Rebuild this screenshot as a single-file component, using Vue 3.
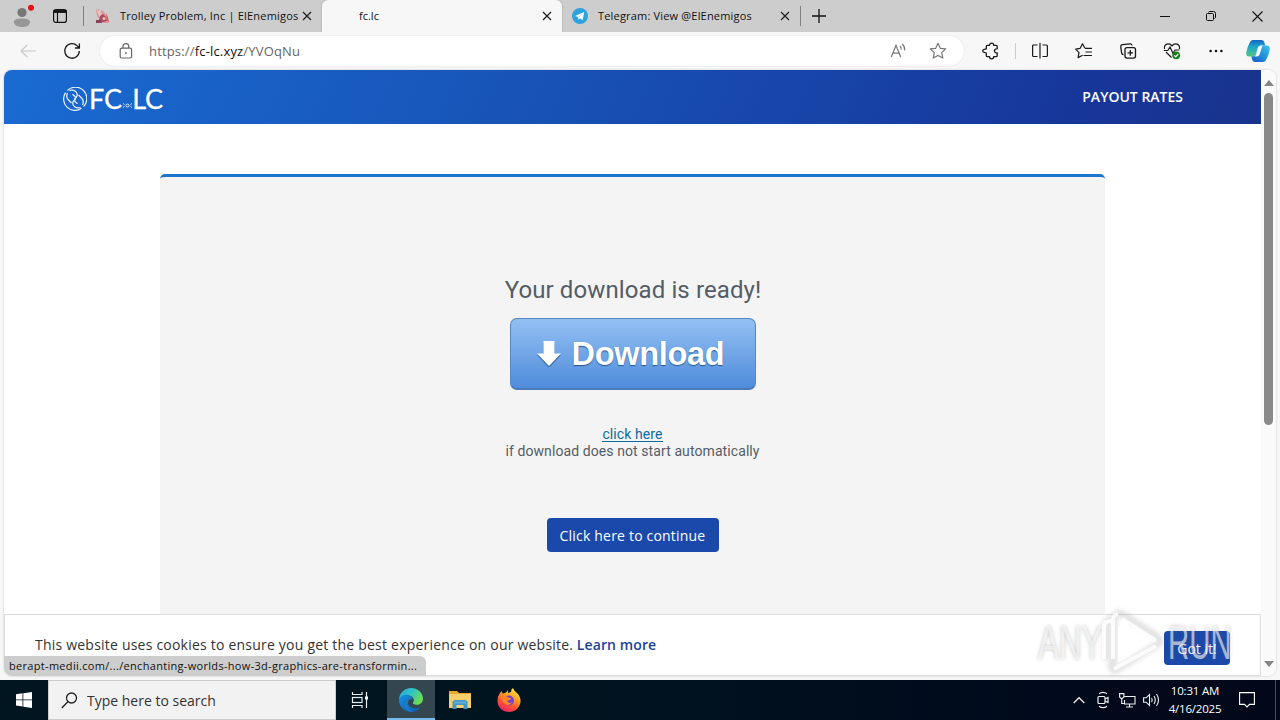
<script setup>
import { ref } from "vue";

const search = ref("");
const cookieBar = ref(true);
</script>

<template>
  <div class="desktop">
    <div class="tabstrip">
      <div class="profile">
        <svg width="24" height="24" viewBox="0 0 24 24">
          <circle cx="10" cy="8.5" r="4.6" fill="#777" />
          <path d="M1.8 18.5c0-3 3-4 8.200-4s8.200 1 8.200 4c-1.500 4-5 4.500-8.200 4.500s-6.700-.5-8.200-4.500z" fill="#979797" />
          <circle cx="19" cy="3.800" r="3" fill="#e8101c" />
        </svg>
      </div>
      <svg class="workspaces" width="16" height="16" viewBox="0 0 16 16" fill="none" stroke="#111" stroke-width="1.200">
        <rect x="1.600" y="1.600" width="12.800" height="12.800" rx="2.200" />
        <path d="M1.600 3.500h12.800" stroke-width="2.800" />
        <path d="M5.500 4v10.400" />
      </svg>
      <div class="tab tab-first">
        <svg class="favicon" width="16" height="16" viewBox="0 0 16 16">
          <path d="M1 2l3-1 1 3 2-2 3 3 2 4 1 2 1 4H2l2-4-2-3z" fill="#d99b9c" />
          <path d="M2 2l3 1 2 4-2 2-2-3z" fill="#ecc3bd" />
          <path d="M5 8l3-2 3 3 1 4-4 1-4-1z" fill="#ab4a63" />
          <circle cx="9" cy="10.500" r="1.500" fill="#edc6bd" />
          <path d="M1 12h5l1 3H1z" fill="#8a4058" />
          <path d="M11 5l2 4 1 5-2-1z" fill="#d86a58" />
        </svg>
        <span class="tab-title t1">Trolley Problem, Inc | ElEnemigos</span>
        <svg class="close" width="10" height="10" viewBox="0 0 10 10"><path d="M1 1l8 8M9 1L1 9" stroke="#222" stroke-width="1.300" /></svg>
      </div>
      <div class="tab tab-active">
        <span class="tab-title t2">fc.lc</span>
        <svg class="close" width="10" height="10" viewBox="0 0 10 10"><path d="M1 1l8 8M9 1L1 9" stroke="#222" stroke-width="1.300" /></svg>
      </div>
      <div class="tab tab-last">
        <svg class="favicon" width="16" height="16" viewBox="0 0 16 16">
          <circle cx="8" cy="8" r="8" fill="#2ca3dc" />
          <path d="M3 7.900l9.200-3.900-1.500 8.200-2.700-2-1.500 1.500-.4-2.600z" fill="#fff" />
          <path d="M6 9l4.500-3.200L7 9.600z" fill="#b4d8ec" />
        </svg>
        <span class="tab-title t3">Telegram: View @ElEnemigos</span>
        <svg class="close" width="10" height="10" viewBox="0 0 10 10"><path d="M1 1l8 8M9 1L1 9" stroke="#222" stroke-width="1.300" /></svg>
      </div>
      <svg class="new-tab" width="14" height="14" viewBox="0 0 14 14"><path d="M7 0v14M0 7h14" stroke="#111" stroke-width="1.300" /></svg>
      <div class="win-controls">
        <span><svg width="10" height="10"><path d="M0 5.500h10" stroke="#111" /></svg></span>
        <span>
          <svg width="10" height="10" viewBox="0 0 10 10" fill="none" stroke="#111">
            <rect x=".5" y="2.500" width="7" height="7" rx="1" />
            <path d="M2.500 1.500q.3-1 1.300-1h3.700a2 2 0 0 1 2 2v3.700q0 1-1 1.300" />
          </svg>
        </span>
        <span><svg width="11" height="11" viewBox="0 0 11 11"><path d="M.5.5l10 10M10.500.5l-10 10" stroke="#111" stroke-width="1.100" /></svg></span>
      </div>
    </div>

    <div class="toolbar">
      <svg class="back" width="16" height="14" viewBox="0 0 16 14" fill="none" stroke="#c8c8c8" stroke-width="1.200"><path d="M16 7H1M7.500.7L1 7l6.500 6.300" /></svg>
      <svg class="reload" width="18" height="18" viewBox="0 0 18 18" fill="none" stroke="#1a1a1a" stroke-width="1.300">
        <path d="M16.300 9a7.300 7.300 0 1 1-2-5.100L16.300 6M16.400 1.500V6h-4.500" />
      </svg>
      <div class="address">
        <svg class="lock" width="14" height="16" viewBox="0 0 14 16" fill="none" stroke="#666" stroke-width="1.200">
          <rect x="1.200" y="5.200" width="11.400" height="9.800" rx="1.500" />
          <path d="M4 5V3.500a2.900 2.900 0 0 1 5.800 0V5" />
          <circle cx="6.900" cy="10" r=".7" fill="#666" stroke-width=".6" />
        </svg>
        <span class="url">https://<b>fc-lc.xyz</b>/YVOqNu</span>
        <svg class="read-aloud" width="18" height="16" viewBox="0 0 18 16" fill="none" stroke="#777" stroke-width="1.200">
          <path d="M2.300 14L7 2.300 11.700 14M3.900 10.200h6.200M11 3q1.500 1.500 1.200 3.600M13.200 1q2.900 2.600 2.400 6.300" />
        </svg>
        <svg class="star" width="18" height="18" viewBox="0 0 18 18" fill="none" stroke="#777" stroke-width="1.200" stroke-linejoin="round">
          <path d="M9 1.300l2.300 5 5.400.6-4 3.700 1.100 5.500L9 13.400l-4.800 2.700 1.100-5.500-4-3.700 5.400-.6z" />
        </svg>
      </div>
      <span class="tool ext">
        <svg width="18" height="18" viewBox="0 0 18 18" fill="none" stroke="#1a1a1a" stroke-width="1.300" stroke-linejoin="round">
          <path d="M5.500 3.300h2a2.100 2.100 0 0 1 4.200 0h2.300q1.200 0 1.200 1.200v2.300h-.6a2 2 0 0 0 0 4.200h.6v2.500q0 1.200-1.200 1.200h-2.300a2.100 2.100 0 0 1-4.200 0h-2q-1.200 0-1.200-1.200V11l-2-.6a1.500 1.500 0 0 1 0-3l2-.6V4.500q0-1.200 1.200-1.200z" />
        </svg>
      </span>
      <span class="divider"></span>
      <span class="tool">
        <svg width="18" height="18" viewBox="0 0 18 18" fill="none" stroke="#1a1a1a" stroke-width="1.200">
          <path d="M6.500 3H2.600q-1 0-1 1v9.500q0 1 1 1h3.900M11.500 3h3.900q1 0 1 1v9.500q0 1-1 1h-3.900M9 1v15.500" />
        </svg>
      </span>
      <span class="tool">
        <svg width="18" height="18" viewBox="0 0 18 18" fill="none" stroke="#1a1a1a" stroke-width="1.200" stroke-linejoin="round">
          <path d="M10 6.300L7.500 1.800 5.200 6.300l-4.500.8 3.300 3.500-.9 5 4.500-2.400M10 6.300h7M10.500 10H17M8.500 13.500H17" />
        </svg>
      </span>
      <span class="tool">
        <svg width="18" height="18" viewBox="0 0 18 18" fill="none" stroke="#1a1a1a" stroke-width="1.300">
          <rect x="6" y="5.600" width="10.500" height="10.500" rx="2" />
          <path d="M11.300 8v5.700M8.500 10.800h5.600M13 3.500q-.3-1.800-2-1.600l-7.500.8q-2 .3-1.700 2.200l.8 6q.2 1.600 2 1.700" />
        </svg>
      </span>
      <span class="tool">
        <svg width="18" height="18" viewBox="0 0 18 18" fill="none" stroke="#1a1a1a" stroke-width="1.200">
          <path d="M1.500 7q-.6-4.700 3.500-5.200 2.500-.2 4 2 1.500-2.200 4-2 4 .5 3.500 5.200M3 10l5.500 5.500M.8 8.500h4L7 5l3 6.500L12 8h4.500" />
          <circle cx="13.200" cy="13.300" r="3.900" fill="#16801b" stroke="none" />
          <path d="M11.200 13.300l1.500 1.500 2.600-3" stroke="#fff" />
        </svg>
      </span>
      <span class="tool"><svg width="14" height="4"><g fill="#1a1a1a"><circle cx="1.600" cy="2" r="1.300" /><circle cx="7" cy="2" r="1.300" /><circle cx="12.400" cy="2" r="1.300" /></g></svg></span>
      <span class="tool copilot">
        <svg width="24" height="24" viewBox="0 0 24 24">
          <defs>
            <linearGradient id="cpA" x1="0" y1="0" x2="0" y2="1"><stop offset="0" stop-color="#1466c5" /><stop offset=".4" stop-color="#1da6c8" /><stop offset="1" stop-color="#52c587" /></linearGradient>
            <linearGradient id="cpB" x1="0" y1="1" x2="1" y2="0"><stop offset="0" stop-color="#1556cc" /><stop offset=".6" stop-color="#239cd9" /><stop offset="1" stop-color="#48c5ec" /></linearGradient>
          </defs>
          <path d="M7 1h8.500q2 0 2.700 2l1 3.500h-4.400q-2 0-2.700 2.200L9.500 15q-.8 2.500-3 2.500H3q-3 0-2.800-3.500Q1 8 4 3q1-2 3-2z" fill="url(#cpA)" />
          <path d="M17 23H9q-2 0-2.700-2l-1-3.500q3.500.5 4.300-2.500L11.800 9q.7-2.500 3-2.500H21q3 0 2.800 3.500Q23 16 20 21q-1 2-3 2z" fill="url(#cpB)" />
          <path d="M11.700 9q.7-2.500 3.300-2.500h1.500L13.800 15q-.8 2.500-3 2.500H8q1.500-.5 2-2z" fill="#f0fbff" />
        </svg>
      </span>
    </div>

    <div class="viewport">
      <div class="page">
        <header>
          <div class="brand">
            <svg width="24" height="24" viewBox="0 0 24 24" fill="none" stroke="#e8f2ff" stroke-width="1.200">
              <path d="M4.500 3.500A11.300 11.300 0 0 1 20.500 19.500M18.500 21.200A11.300 11.300 0 0 1 2.600 5.600" />
              <path d="M6.500 3.500Q12 2 14 6.500q1 2.500-1.500 4.500-2.200 2 0 4l2 1.800" />
              <path d="M17.500 20.500Q12 22 10 17.500q-1-2.500 1.500-4.500 2.200-2 0-4l-2-1.800" />
              <path d="M4.500 6q-2 4 1 7l3 3M19.500 18q2-4-1-7l-3-3" />
            </svg>
            <span class="fc">FC</span>
            <svg class="chain" width="9" height="7" viewBox="0 0 9 7" fill="none" stroke="#dcebff"><circle cx="4.500" cy="3.500" r="1.500" /><path d="M0 1.500l1.500 1M0 5.500l1.500-1M9 1.500l-1.500 1M9 5.500l-1.500-1" /></svg>
            <span class="lc">LC</span>
          </div>
          <a class="rates">PAYOUT RATES</a>
        </header>
        <main>
          <section class="card">
            <h1><span>Your download is ready!</span></h1>
            <button class="download">
              <svg width="24" height="26" viewBox="0 0 24 26">
                <path d="M6.500 2h11v12H24L12 27 0 14h6.500z" fill="#3c6fae" />
                <path d="M6.500 0h11v12.500H24L12 25 0 12.500h6.500z" fill="#fff" />
              </svg>
              <span>Download</span>
            </button>
            <p class="fallback"><a>click here</a><br /><span>if download does not start automatically</span></p>
            <button class="continue"><span>Click here to continue</span></button>
          </section>
        </main>
        <div v-if="cookieBar" class="cookies">
          <p><span class="msg">This website uses cookies to ensure you get the best experience on our website.</span> <a>Learn more</a></p>
          <button class="gotit" @click="cookieBar = false">Got it!</button>
        </div>
      </div>
      <div class="scrollbar">
        <svg width="10" height="6"><path d="M0 6L5 0l5 6z" fill="#858585" /></svg>
        <i></i>
        <svg width="10" height="6"><path d="M0 0h10L5 6z" fill="#858585" /></svg>
      </div>
      <div class="status"><span>berapt-medii.com/.../enchanting-worlds-how-3d-graphics-are-transformin...</span></div>
    </div>

    <div class="watermark">
      <svg width="240" height="75" viewBox="0 0 240 75">
        <g class="mark-shadow">
          <path d="M76 55V18q2-4 7-4M84 55V12q4-6 10-2l34 22q4 4 0 7L86 65q-4 1-5-5z" />
        </g>
        <g class="mark">
          <text transform="translate(8 54) scale(.64 1)">ANY</text>
          <text transform="translate(138 54) scale(.6 1)">RUN</text>
          <path d="M74 54V22q0-6 7-6M83 54V15q0-5 5-6M92 14l34 22M90 24v30l25-17zM84 64l42-23" />
        </g>
      </svg>
    </div>

    <div class="taskbar">
      <span class="start">
        <svg width="16" height="16" viewBox="0 0 16 16" fill="#fff"><path d="M0 2.200l6.500-.9v6.200H0zM7.300 1.200L16 0v7.500H7.300zM0 8.300h6.500v6.200L0 13.600zM7.300 8.300H16V16l-8.700-1.300z" /></svg>
      </span>
      <label class="search">
        <svg width="17" height="17" viewBox="0 0 17 17" fill="none" stroke="#222" stroke-width="1.300"><circle cx="10.500" cy="6" r="5" /><path d="M7 9.500L.8 16" /></svg>
        <input v-model="search" placeholder="Type here to search" />
      </label>
      <span class="app">
        <svg width="18" height="16" viewBox="0 0 18 16" fill="none" stroke="#e8eef0" stroke-width="1.200">
          <path d="M1.500 0v2.500h9.500V0M1.500 16v-2.500h9.500V16M15.500 0v16" />
          <rect x="1.500" y="5.500" width="9.500" height="5" />
          <path d="M14 4.500h3v3h-3z" fill="#fff" stroke="none" />
        </svg>
      </span>
      <span class="app running">
        <svg width="24" height="24" viewBox="0 0 24 24">
          <defs>
            <linearGradient id="edA" x1="0" y1="0" x2="1" y2=".5"><stop offset="0" stop-color="#2ba7e0" /><stop offset=".5" stop-color="#2fc2c8" /><stop offset="1" stop-color="#6bdc54" /></linearGradient>
            <linearGradient id="edB" x1="0" y1="0" x2="1" y2="1"><stop offset="0" stop-color="#1590df" /><stop offset="1" stop-color="#1159a8" /></linearGradient>
          </defs>
          <path d="M0 12C0 5 5.500 0 12 0s12 4.800 12 10.500c0 4-3 6.300-6.200 6.300-2.700 0-4.500-1-3.600-2.500 2-3-.8-6.800-4.700-6.800C5 7.500 1 9.500 0 12z" fill="url(#edA)" />
          <path d="M0 12c1-3.700 5-5.800 8.500-5.200 3 .5 5 2.500 5 4.500-2.500-1-5 1-4.500 4 .7 4 6 6.500 12.500 3.700C19.500 22.500 16 24 12.500 24 5.500 24 0 19 0 12z" fill="url(#edB)" />
          <path d="M9 12c-2.500 4 .5 10 5.500 11.700C8 24.500 4.500 20 5 16c.3-2 2-3.500 4-4z" fill="#1a79c9" />
        </svg>
      </span>
      <span class="app">
        <svg width="22" height="20" viewBox="0 0 22 20">
          <path d="M0 1h8l2 2h12v15H0z" fill="#e8a92c" />
          <path d="M0 4h22v14H0z" fill="#f5d06a" />
          <path d="M3.500 19v-7.500l2-1.500h11l2 1.500V19h-4v-4h-7v4z" fill="#4298c9" />
          <path d="M5 11.500h12v2H5z" fill="#5fabd2" />
        </svg>
      </span>
      <span class="app">
        <svg width="24" height="24" viewBox="0 0 24 24">
          <defs><linearGradient id="ffA" x1=".8" y1="0" x2=".3" y2="1"><stop offset="0" stop-color="#fff044" /><stop offset=".4" stop-color="#ff9a22" /><stop offset=".7" stop-color="#ff4f36" /><stop offset="1" stop-color="#e62263" /></linearGradient></defs>
          <path d="M3 5l1.500-2 1 2.500L8 5q2-1 3-3v3l3-1q0-3 2-4 1 3 4 5 4 4 3.500 9C22.700 20 18 24 12 24S.5 19.500.5 13q0-5 2.500-8z" fill="url(#ffA)" />
          <circle cx="12" cy="12.500" r="5" fill="#7542d5" />
          <path d="M4 9q4-2 7 .5l3 .5-1 2-3 .8q1 3 5 1.700-2 3.500-6 2-4-2-5-7.500z" fill="#ff8428" />
        </svg>
      </span>
      <div class="tray">
        <span><svg width="12" height="8" viewBox="0 0 12 8" fill="none" stroke="#eee" stroke-width="1.300"><path d="M.7 7L6 1.700 11.300 7" /></svg></span>
        <span>
          <svg width="14" height="18" viewBox="0 0 14 18" fill="none" stroke="#eee" stroke-width="1.200"><rect x="2" y="5.500" width="7" height="7" rx="1" /><path d="M9 8l3-1.500v5L9 10M3 2.800Q7 0 11 2.800M3 15.200Q7 18 11 15.200" /></svg>
        </span>
        <span>
          <svg width="17" height="15" viewBox="0 0 17 15" fill="none" stroke="#eee" stroke-width="1.100"><path d="M5 3.500h11v7.500H5.500V7M10.500 11v3M7 14h7M.6.600h4.300V4L2.700 6 .6 4zM2.700 6v4.500h3" /></svg>
        </span>
        <span>
          <svg width="17" height="14" viewBox="0 0 17 14" fill="none" stroke="#eee" stroke-width="1.100"><path d="M.6 4.800h2.600L6.500 1.500v11L3.200 9.200H.6zM8.500 5q1.300 2 0 4M11 3q2.500 4 0 8M13.500 1q4 6 0 12" /></svg>
        </span>
        <div class="clock"><span class="time">10:31 AM</span><span class="date">4/16/2025</span></div>
        <span class="notify">
          <svg width="16" height="16" viewBox="0 0 16 16" fill="none" stroke="#fff" stroke-width="1.100"><path d="M.6.600h14.800v11.800H10.500L8 15l-2.500-2.600H.6z" /></svg>
        </span>
      </div>
    </div>
  </div>
</template>

<style>
body {
  margin: 0;
  overflow: hidden;
}
</style>

<style scoped>
.desktop {
  position: relative;
  display: flex;
  flex-direction: column;
  width: 1280px;
  height: 720px;
  overflow: hidden;
  background: #f7f7f7;
  font-family: "Open Sans", "Noto Sans", sans-serif;
  color: #111;
}

svg {
  display: block;
  flex: none;
}

span,
a {
  white-space: nowrap;
}

button {
  border: 0;
  padding: 0;
  font-family: inherit;
  cursor: pointer;
}

.tabstrip {
  display: flex;
  align-items: center;
  height: 32px;
  background: #cdcdcd;
  box-sizing: border-box;
}

.profile {
  width: 40px;
  padding-left: 12px;
  box-sizing: border-box;
}

.workspaces {
  margin-left: 12px;
}

.tab {
  display: flex;
  align-items: center;
  height: 32px;
  box-sizing: border-box;
  font-size: 11px;
}

.tab-first {
  position: relative;
  width: 239px;
  margin-left: 15px;
  padding: 0 10px 0 12px;
}

.tab-first::before,
.tab-last::after {
  content: "";
  position: absolute;
  left: 0;
  top: 6px;
  width: 1px;
  height: 20px;
  background: #808080;
}

.tab-title {
  flex: 1;
  line-height: 16px;
  margin-top: -1px;
}

.favicon {
  margin-right: 9px;
}

.tab-active {
  width: 240px;
  padding: 0 10px 0 37px;
  background: #f7f7f7;
  border-radius: 6px 6px 0 0;
  box-shadow: 0 0 2px #999;
}

.tab-last {
  position: relative;
  width: 239px;
  padding: 0 11px 0 10px;
}

.tab-last::after {
  left: auto;
  right: 0;
}

.t1 {
  letter-spacing: 0.19px;
}

.t3 {
  margin-left: 1px;
  letter-spacing: 0.18px;
}

.new-tab {
  margin-left: 11px;
}

.win-controls {
  display: flex;
  margin-left: auto;
}

.win-controls span {
  display: flex;
  justify-content: center;
  align-items: center;
  width: 46px;
  height: 32px;
}

.toolbar {
  display: flex;
  align-items: center;
  height: 38px;
  background: #f7f7f7;
}

.back {
  margin-left: 20px;
}

.reload {
  margin-left: 27px;
}

.address {
  display: flex;
  align-items: center;
  width: 864px;
  height: 30px;
  margin-left: 19px;
  border-radius: 15px;
  background: #fff;
  box-shadow: 0 0 2px #ddd;
  box-sizing: border-box;
  padding: 0 17px 0 19px;
}

.url {
  flex: 1;
  margin-left: 16px;
  color: #666;
  font-size: 13px;
  letter-spacing: 0.17px;
}

.url b {
  color: #111;
  font-weight: 400;
}

.star {
  margin-left: 22px;
}

.tool {
  display: flex;
  justify-content: center;
  align-items: center;
  width: 44px;
}

.ext {
  margin-left: 5px;
}

.divider {
  width: 1px;
  height: 16px;
  margin: 0 2px;
  background: #ccc;
}

.copilot {
  width: 40px;
  margin-right: 2px;
}

.viewport {
  position: relative;
  display: flex;
  width: 1272px;
  height: 606px;
  margin-left: 4px;
  border-radius: 8px;
  background: #fff;
  box-shadow: 0 0 2px #bbb;
  overflow: hidden;
}

.page {
  position: relative;
  display: flex;
  flex-direction: column;
  width: 1257px;
}

header {
  display: flex;
  flex: none;
  align-items: center;
  justify-content: space-between;
  height: 54px;
  padding: 0 78px 0 59px;
  background: linear-gradient(115deg, #196bd2 0%, #1854b8 40%, #17369a 85%, #19348d 100%);
}

.brand {
  display: flex;
  align-items: center;
  margin-top: 4px;
  color: #fff;
  font: 27px/26px Lato, sans-serif;
}

.brand span {
  -webkit-text-stroke: 0.3px #fff;
}

.fc {
  margin-left: 2px;
}

.chain {
  margin: 12px 0 0 1px;
}

.rates {
  margin-bottom: 2px;
  color: #fff;
  font-size: 14px;
  font-weight: 600;
}

main {
  flex: 1;
  min-height: 0;
  padding: 50px 156px 0;
}

.card {
  display: flex;
  flex-direction: column;
  align-items: center;
  width: 945px;
  height: 520px;
  box-sizing: border-box;
  border-top: 3px solid #1e75cd;
  border-radius: 5px;
  background: #f4f4f4;
  color: #545c66;
  font-family: Roboto, sans-serif;
}

h1 {
  margin: 96px 0 0 1px;
  font-size: 24px;
  line-height: 34px;
  font-weight: 400;
  letter-spacing: 0.11px;
}

.download {
  display: flex;
  align-items: center;
  box-sizing: border-box;
  width: 246px;
  height: 72px;
  margin-top: 11px;
  padding: 1px 0 0 26px;
  border: 1px solid #5588c2;
  border-bottom: 2px solid #4a7bb8;
  border-radius: 7px;
  background: linear-gradient(#93c0f3, #4f8cdb);
  color: #fff;
  font: bold 32.500px/40px "Liberation Sans", Arial, sans-serif;
  letter-spacing: -0.300px;
  text-shadow: 0 1px 1px #24528f;
}

.download span {
  margin-left: 11px;
}

.fallback {
  margin: 36px 0 0;
  font-size: 14px;
  line-height: 17px;
  letter-spacing: 0.09px;
  text-align: center;
}

.fallback a {
  color: #0b6ba0;
  border-bottom: 1px solid #0b6ba0;
  line-height: 14px;
  display: inline-block;
}

.continue {
  width: 172px;
  height: 34px;
  margin-top: 58px;
  border-radius: 4px;
  background: #1b49ab;
  color: #fff;
  font: 14px "Open Sans", sans-serif;
  letter-spacing: 0.19px;
}

.cookies {
  position: absolute;
  left: 0;
  bottom: 0;
  display: flex;
  justify-content: space-between;
  width: 1257px;
  height: 62px;
  box-sizing: border-box;
  border: 1px solid #ddd;
  background: #fff;
  padding: 16px 30px;
}

.cookies p {
  margin: 4px 0 0;
  font-size: 14px;
  line-height: 20px;
  color: #333;
}

.msg {
  letter-spacing: 0.215px;
}

.cookies a {
  color: #1b429f;
  font-weight: 600;
  letter-spacing: 0.1px;
}

.gotit {
  width: 66px;
  height: 34px;
  border-radius: 4px;
  background: #1b49ab;
  color: #fff;
  font-size: 14px;
}

.scrollbar {
  display: flex;
  flex-direction: column;
  align-items: center;
  width: 15px;
  padding: 10px 0 9px;
  background: #fafafa;
}

.scrollbar i {
  width: 9px;
  height: 332px;
  margin: 7px 0 auto;
  border-radius: 5px;
  background: #898989;
}

.status {
  position: absolute;
  left: 0;
  bottom: 0;
  width: 422px;
  height: 20px;
  padding-left: 5px;
  box-sizing: border-box;
  border-radius: 0 6px 0 8px;
  background: #cdcdcd;
  font-size: 11px;
  line-height: 20px;
  letter-spacing: 0.31px;
}

.watermark {
  position: absolute;
  left: 1030px;
  top: 605px;
  pointer-events: none;
}

.watermark text {
  font: 49px "Liberation Sans", sans-serif;
}

.mark-shadow {
  fill: none;
  stroke: rgba(110, 110, 110, 0.2);
  stroke-width: 7;
  filter: blur(2px);
}

.mark {
  fill: none;
  stroke: rgba(255, 255, 255, 0.85);
  stroke-width: 4;
}

.mark text {
  fill: rgba(255, 255, 255, 0.6);
  stroke: none;
  text-shadow: 0 0 4px rgba(90, 90, 90, 0.6);
}

.taskbar {
  display: flex;
  height: 40px;
  margin-top: 4px;
  background: linear-gradient(90deg, #00151f, #001420 45%, #000b1c 75%, #02081a);
}

.start,
.app,
.tray > span {
  display: flex;
  justify-content: center;
  align-items: center;
}

.start {
  width: 48px;
}

.search {
  display: flex;
  align-items: center;
  width: 288px;
  box-sizing: border-box;
  padding-left: 12px;
  border: 1px solid #ccc;
  background: #f2f2f2;
}

.search input {
  flex: 1;
  min-width: 0;
  margin-left: 9px;
  padding: 0;
  border: 0;
  outline: none;
  background: transparent;
  font: 14px "Open Sans", sans-serif;
}

.search input::placeholder {
  color: #333;
}

.app {
  width: 48px;
  margin-right: 1px;
}

.running {
  margin-left: 2px;
  background: #344750;
  box-shadow: inset 0 -2px #76b9ed;
}

.tray {
  display: flex;
  margin-left: auto;
}

.tray > span {
  width: 24px;
}

.clock {
  display: flex;
  flex-direction: column;
  align-items: center;
  width: 64px;
  padding-top: 2px;
  color: #fff;
  font-size: 11.500px;
  line-height: 18px;
  letter-spacing: -0.2px;
}

.tray > .notify {
  width: 40px;
  margin-right: 4px;
  padding-right: 8px;
  border-right: 1px solid #45505a;
}
</style>
